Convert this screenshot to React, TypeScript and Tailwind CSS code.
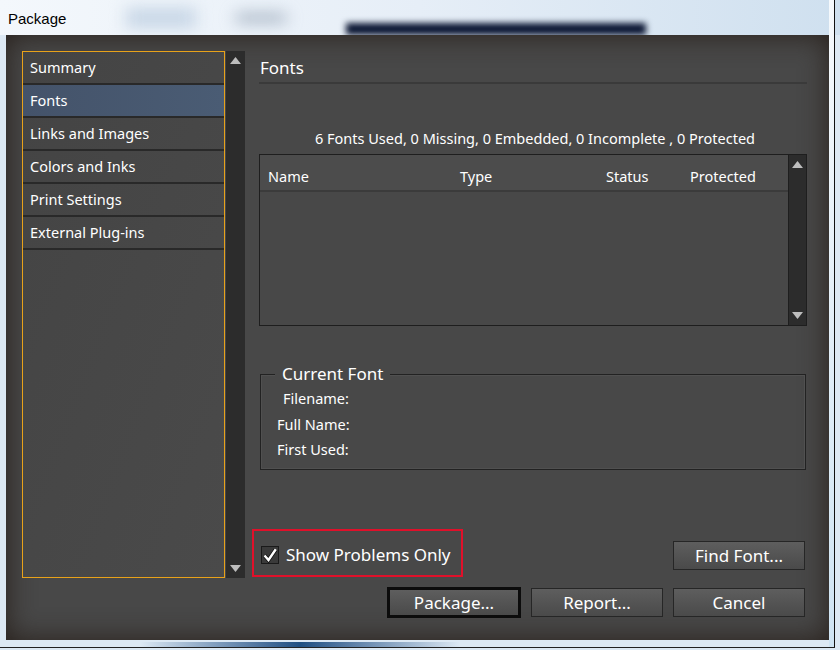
import React from "react";

const items = ["Summary", "Fonts", "Links and Images", "Colors and Inks", "Print Settings", "External Plug-ins"];

function Arrow({ up }: { up?: boolean }) {
  return (
    <svg width="11" height="7" viewBox="0 0 11 7" className="block">
      {up ? <path d="M0 7 L5.5 0 L11 7 Z" fill="#bdbdbd" /> : <path d="M0 0 L5.5 7 L11 0 Z" fill="#bdbdbd" />}
    </svg>
  );
}

function Scrollbar({ className }: { className: string }) {
  return (
    <div className={`flex flex-col items-center justify-between bg-[#2c2c2c] py-[6px] ${className}`}>
      <Arrow up />
      <Arrow />
    </div>
  );
}

function Btn({ label, primary }: { label: string; primary?: boolean }) {
  return (
    <button
      className={`h-[29px] w-[132px] flex items-center justify-center bg-gradient-to-b from-[#5e5e5e] to-[#4a4a4a] text-[17px] text-white ${
        primary ? "border-[3px] border-[#0c0c0c] w-[134px] h-[31px]" : "border border-[#262626]"
      }`}
    >
      {label}
    </button>
  );
}

export default function App() {
  return (
    <div className="relative w-[840px] h-[650px] overflow-hidden bg-[#dde9f4] font-['Open_Sans',sans-serif]">
      {/* title bar */}
      <div className="h-[35px] flex items-center bg-gradient-to-r from-[#f4f8fc] via-[#e6eef7] to-[#cfe0ef]">
        <span className="ml-[8px] mt-[3px] text-[15px] text-black font-['Liberation_Sans',sans-serif]">Package</span>
        <div className="ml-[60px] h-[20px] w-[70px] bg-[#c7d6e6] blur-sm" />
        <div className="ml-[40px] h-[6px] w-[50px] bg-[#7d8ea3] blur-sm" />
        <div className="ml-[60px] h-[12px] w-[300px] mt-[22px] bg-[#0b1633] blur-[3px]" />
      </div>

      {/* dialog body */}
      <div className="absolute left-[6px] top-[35px] w-[823px] h-[605px] bg-[#484848] shadow-[inset_0_0_28px_rgba(38,30,24,0.95)] flex pl-[16px] pt-[16px] text-white">
        {/* sidebar */}
        <div className="flex h-[527px] gap-[1px]">
          <div className="w-[203px] border border-[#e8a21a] bg-gradient-to-br from-[#444] to-[#4a4a4a] text-[14.5px] font-['Noto_Sans',sans-serif]">
            {items.map((it) => (
              <div
                key={it}
                className={`h-[33px] flex items-center pl-[7px] border-b-2 border-[#292929] ${
                  it === "Fonts" ? "bg-gradient-to-r from-[#44536a] to-[#4a5c74]" : ""
                }`}
              >
                {it}
              </div>
            ))}
          </div>
          <Scrollbar className="w-[19px]" />
        </div>

        {/* right panel */}
        <div className="ml-[14px] w-[548px] flex flex-col font-['Noto_Sans',sans-serif]">
          <div className="h-[33px] flex items-center pl-[1px] pt-[2px] text-[17px] border-b-2 border-[#3a3a3a]">Fonts</div>

          <div className="mt-[44px] text-center text-[14.5px] leading-[20px] pl-[4px]">
            6 Fonts Used, 0 Missing, 0 Embedded, 0 Incomplete , 0 Protected
          </div>

          <div className="mt-[6px] h-[172px] flex border border-[#1e1e1e] bg-[#484848]">
            <div className="flex-1 flex flex-col">
              <div className="h-[37px] flex items-center pt-[8px] text-[14.5px] bg-[#4c4c4c] border-b-2 border-[#3b3b3b]">
                <span className="pl-[8px] w-[200px]">Name</span>
                <span className="w-[146px]">Type</span>
                <span className="w-[84px]">Status</span>
                <span>Protected</span>
              </div>
              <div className="flex-1" />
            </div>
            <Scrollbar className="w-[18px] border-l border-[#1e1e1e]" />
          </div>

          {/* group box */}
          <div className="relative mt-[48px] ml-[1px] mr-[1px] h-[96px] border border-[#222] shadow-[inset_0_0_0_1px_#505050]">
            <span className="absolute left-[14px] -top-[13px] px-[7px] bg-[#484848] text-[17px] leading-[24px]">Current Font</span>
            <div className="pt-[11px] text-[14.5px] leading-[25.5px]">
              <div className="pl-[22px]">Filename:</div>
              <div className="pl-[16px]">Full Name:</div>
              <div className="pl-[16px]">First Used:</div>
            </div>
          </div>

          {/* checkbox + find font */}
          <div className="mt-[59px] flex items-start">
            <div className="-ml-[7px] w-[211px] h-[48px] border-2 border-[#e0102a] flex items-center pt-[4px] pl-[7px] gap-[7px]">
              <div className="w-[18px] h-[18px] bg-[#3a3a3a] border border-[#1a1a1a] flex items-center justify-center">
                <svg width="17" height="17" viewBox="0 0 16 16">
                  <path d="M2.5 8 L6.5 12.5 L13.8 1.8" stroke="#111" strokeWidth="4" fill="none" />
                  <path d="M2.5 8 L6.5 12.5 L13.8 1.8" stroke="white" strokeWidth="2.4" fill="none" />
                </svg>
              </div>
              <span className="text-[17px]">Show Problems Only</span>
            </div>
            <div className="ml-auto mt-[12px] mr-[2px]">
              <Btn label="Find Font..." />
            </div>
          </div>

          <div className="mt-[11px] flex justify-end gap-[10px] mr-[2px]">
            <div className="-mt-[1px]">
              <Btn label="Package..." primary />
            </div>
            <Btn label="Report..." />
            <Btn label="Cancel" />
          </div>
        </div>
      </div>

      {/* window frame edges */}
      <div className="absolute left-[140px] top-[642px] w-[320px] h-[5px] bg-gradient-to-r from-[#dde9f4] via-[#1f4f82] to-[#dde9f4]" />
      <div className="absolute left-[829px] top-0 w-[6px] h-[648px] bg-gradient-to-b from-[#f6f9fc] to-[#cfe4f3] border-r border-[#111]" />
      <div className="absolute left-0 top-[647px] w-[835px] h-[1px] bg-[#222]" />
    </div>
  );
}
